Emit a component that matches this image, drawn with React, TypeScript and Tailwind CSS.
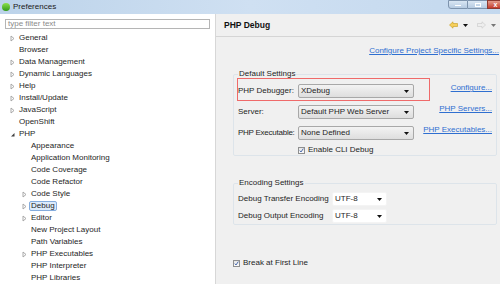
import type { ReactNode } from "react";

type Node = { label: string; level: 1 | 2; arrow?: "closed" | "open"; selected?: boolean };

const tree: Node[] = [
  { label: "General", level: 1, arrow: "closed" },
  { label: "Browser", level: 1 },
  { label: "Data Management", level: 1, arrow: "closed" },
  { label: "Dynamic Languages", level: 1, arrow: "closed" },
  { label: "Help", level: 1, arrow: "closed" },
  { label: "Install/Update", level: 1, arrow: "closed" },
  { label: "JavaScript", level: 1, arrow: "closed" },
  { label: "OpenShift", level: 1 },
  { label: "PHP", level: 1, arrow: "open" },
  { label: "Appearance", level: 2 },
  { label: "Application Monitoring", level: 2 },
  { label: "Code Coverage", level: 2 },
  { label: "Code Refactor", level: 2 },
  { label: "Code Style", level: 2, arrow: "closed" },
  { label: "Debug", level: 2, arrow: "closed", selected: true },
  { label: "Editor", level: 2, arrow: "closed" },
  { label: "New Project Layout", level: 2 },
  { label: "Path Variables", level: 2 },
  { label: "PHP Executables", level: 2, arrow: "closed" },
  { label: "PHP Interpreter", level: 2 },
  { label: "PHP Libraries", level: 2 },
];

function Arrow({ kind }: { kind?: "closed" | "open" }) {
  if (!kind) return <span className="w-[7px]" />;
  if (kind === "open")
    return (
      <svg width="7" height="7" viewBox="0 0 7 7">
        <path d="M5.5 2 L5.5 5.5 L2 5.5 Z" fill="#404040" />
      </svg>
    );
  return (
    <svg width="7" height="7" viewBox="0 0 7 7">
      <path d="M2 1 L5 3.5 L2 6 Z" fill="none" stroke="#a0a0a0" strokeWidth="0.9" />
    </svg>
  );
}

function Caret() {
  return (
    <svg width="5" height="3" viewBox="0 0 5 3">
      <path d="M0 0 L5 0 L2.5 3 Z" fill="#111" />
    </svg>
  );
}

function Combo({ value, width, plain }: { value: string; width: string; plain?: boolean }) {
  return (
    <div
      className={`${width} h-[14px] flex items-center justify-between pl-[2px] pr-[4px] rounded-[2px] ${
        plain
          ? "bg-white border border-[#f4f4f4]"
          : "bg-gradient-to-b from-[#f3f3f3] to-[#dedede] border border-[#a8a8a8]"
      }`}
    >
      <span className="whitespace-nowrap">{value}</span>
      <Caret />
    </div>
  );
}

function Check({ children }: { children: ReactNode }) {
  return (
    <div className="flex items-center gap-[3px]">
      <div className="w-[7px] h-[7px] border border-[#8e8f8f] bg-gradient-to-b from-[#e6e6e6] to-[#fafafa] flex items-center justify-center">
        <svg width="5" height="5" viewBox="0 0 5 5">
          <path d="M0.8 2.6 L2 4 L4.3 0.6" fill="none" stroke="#3a5ea5" strokeWidth="0.9" />
        </svg>
      </div>
      <span className="whitespace-nowrap">{children}</span>
    </div>
  );
}

function Link({ children }: { children: ReactNode }) {
  return <span className="text-[#2f6fd0] underline whitespace-nowrap">{children}</span>;
}

export default function App() {
  return (
    <div
      className="w-[500px] h-[284px] overflow-hidden flex flex-col text-[8px] text-[#1e1e1e] leading-none"
      style={{ fontFamily: '"Liberation Sans", Arial, sans-serif' }}
    >
      {/* title bar */}
      <div className="h-[14px] flex items-start bg-gradient-to-r from-[#bcd3ea] via-[#cfe0f2] to-[#c3d8ee]">
        <div className="flex items-center h-[14px] pl-[2px] gap-[3px]">
          <div className="w-[8px] h-[8px] rounded-full bg-gradient-to-b from-[#8be04a] to-[#2f9a18]" />
          <span className="text-[#202020]">Preferences</span>
        </div>
        <div className="ml-auto flex h-[9px] mr-[-4px]">
          <div className="w-[20px] h-[9px] bg-gradient-to-b from-[#d9e6f3] to-[#b6cbe2] border border-[#7d93ad] rounded-bl-[3px] flex items-end justify-center pb-[2px]">
            <div className="w-[6px] h-[1px] bg-white" />
          </div>
          <div className="w-[19px] h-[9px] bg-gradient-to-b from-[#d9e6f3] to-[#b6cbe2] border-y border-[#7d93ad] flex items-center justify-center">
            <div className="w-[6px] h-[4px] border border-white" />
          </div>
          <div className="w-[17px] h-[9px] bg-gradient-to-b from-[#e39a8a] to-[#c4392a] border border-[#8d3a30] flex items-center justify-center text-white text-[7px] font-bold">
            x
          </div>
        </div>
      </div>

      <div className="flex flex-1 min-h-0">
        {/* left tree */}
        <div className="w-[216px] bg-white border-r border-[#d7d7d7] flex flex-col pt-[5px]">
          <div className="mx-[5px] h-[13px] border border-[#b5b5b5] flex items-center pl-[2px] text-[#8a8a8a]">
            type filter text
          </div>
          <div className="mt-[3px] flex flex-col">
            {tree.map((n) => (
              <div
                key={n.label}
                className={`h-[12px] flex items-center ${n.level === 1 ? "pl-[9px]" : "pl-[21px]"}`}
              >
                <div className="w-[10px] flex items-center">
                  <Arrow kind={n.arrow} />
                </div>
                <span
                  className={
                    n.selected
                      ? "ml-[-2px] px-[1px] h-[10px] flex items-center bg-[#dcebfb] border border-[#84acdd] rounded-[2px]"
                      : ""
                  }
                >
                  {n.label}
                </span>
              </div>
            ))}
          </div>
        </div>

        {/* right page */}
        <div className="flex-1 min-w-0 bg-[#f0f0f0] flex flex-col overflow-hidden">
          <div className="h-[23px] border-b border-[#d5d5d5] flex items-center pl-[8px]">
            <span className="font-bold text-[8.5px] text-[#111]">PHP Debug</span>
            <div className="ml-auto flex items-center gap-[5px] mr-[-3px]">
              <svg width="9" height="8" viewBox="0 0 9 8">
                <path d="M0.5 4 L4 0.8 L4 2.5 L8.5 2.5 L8.5 5.5 L4 5.5 L4 7.2 Z" fill="#f6cf5a" stroke="#c59a1e" strokeWidth="0.6" />
              </svg>
              <Caret />
              <svg width="9" height="8" viewBox="0 0 9 8" className="ml-[4px]">
                <path d="M8.5 4 L5 0.8 L5 2.5 L0.5 2.5 L0.5 5.5 L5 5.5 L5 7.2 Z" fill="#eeeeee" stroke="#c8c8c8" strokeWidth="0.6" />
              </svg>
              <svg width="5" height="3" viewBox="0 0 5 3">
                <path d="M0 0 L5 0 L2.5 3 Z" fill="#777" />
              </svg>
              <div className="w-[2px] h-[7px] bg-[#c0c0c0]" />
            </div>
          </div>

          <div className="pt-[10px] flex justify-end pr-[1px]">
            <Link>Configure Project Specific Settings...</Link>
          </div>

          <div className="pl-[17px] pr-[3px] mt-[15px] relative">
            <fieldset className="border border-[#dde4ea] rounded-[2px] px-[4px] pb-[6px] h-[86px]">
              <legend className="px-[1px]">Default Settings</legend>
              <div className="flex">
                <div className="flex flex-col gap-[7px] pt-[6px]">
                  <div className="flex items-center">
                    <span className="w-[60px] whitespace-nowrap">PHP Debugger:</span>
                    <Combo value="XDebug" width="w-[116px]" />
                  </div>
                  <div className="flex items-center">
                    <span className="w-[60px] whitespace-nowrap">Server:</span>
                    <Combo value="Default PHP Web Server" width="w-[116px]" />
                  </div>
                  <div className="flex items-center">
                    <span className="w-[60px] whitespace-nowrap tracking-[-0.25px]">PHP Executable:</span>
                    <Combo value="None Defined" width="w-[116px]" />
                  </div>
                  <div className="pl-[60px] mt-[-1px]">
                    <Check>Enable CLI Debug</Check>
                  </div>
                </div>
                <div className="ml-auto flex flex-col items-end gap-[13px] pt-[6px]">
                  <Link>Configure...</Link>
                  <Link>PHP Servers...</Link>
                  <Link>PHP Executables...</Link>
                </div>
              </div>
            </fieldset>
            {/* highlight annotation */}
            <div className="absolute left-[21px] top-[8px] w-[193px] h-[23px] border border-[#ef6a6a]" />
          </div>

          <div className="pl-[17px] pr-[3px] mt-[23px]">
            <fieldset className="border border-[#dde4ea] rounded-[2px] px-[4px] h-[46px]">
              <legend className="px-[1px]">Encoding Settings</legend>
              <div className="flex flex-col gap-[3px] pt-[5px]">
                <div className="flex items-center">
                  <span className="w-[94px] whitespace-nowrap">Debug Transfer Encoding</span>
                  <Combo value="UTF-8" width="w-[55px]" plain />
                </div>
                <div className="flex items-center">
                  <span className="w-[94px] whitespace-nowrap">Debug Output Encoding</span>
                  <Combo value="UTF-8" width="w-[55px]" plain />
                </div>
              </div>
            </fieldset>
          </div>

          <div className="pl-[17px] mt-[34px]">
            <Check>Break at First Line</Check>
          </div>
        </div>
      </div>
    </div>
  );
}
